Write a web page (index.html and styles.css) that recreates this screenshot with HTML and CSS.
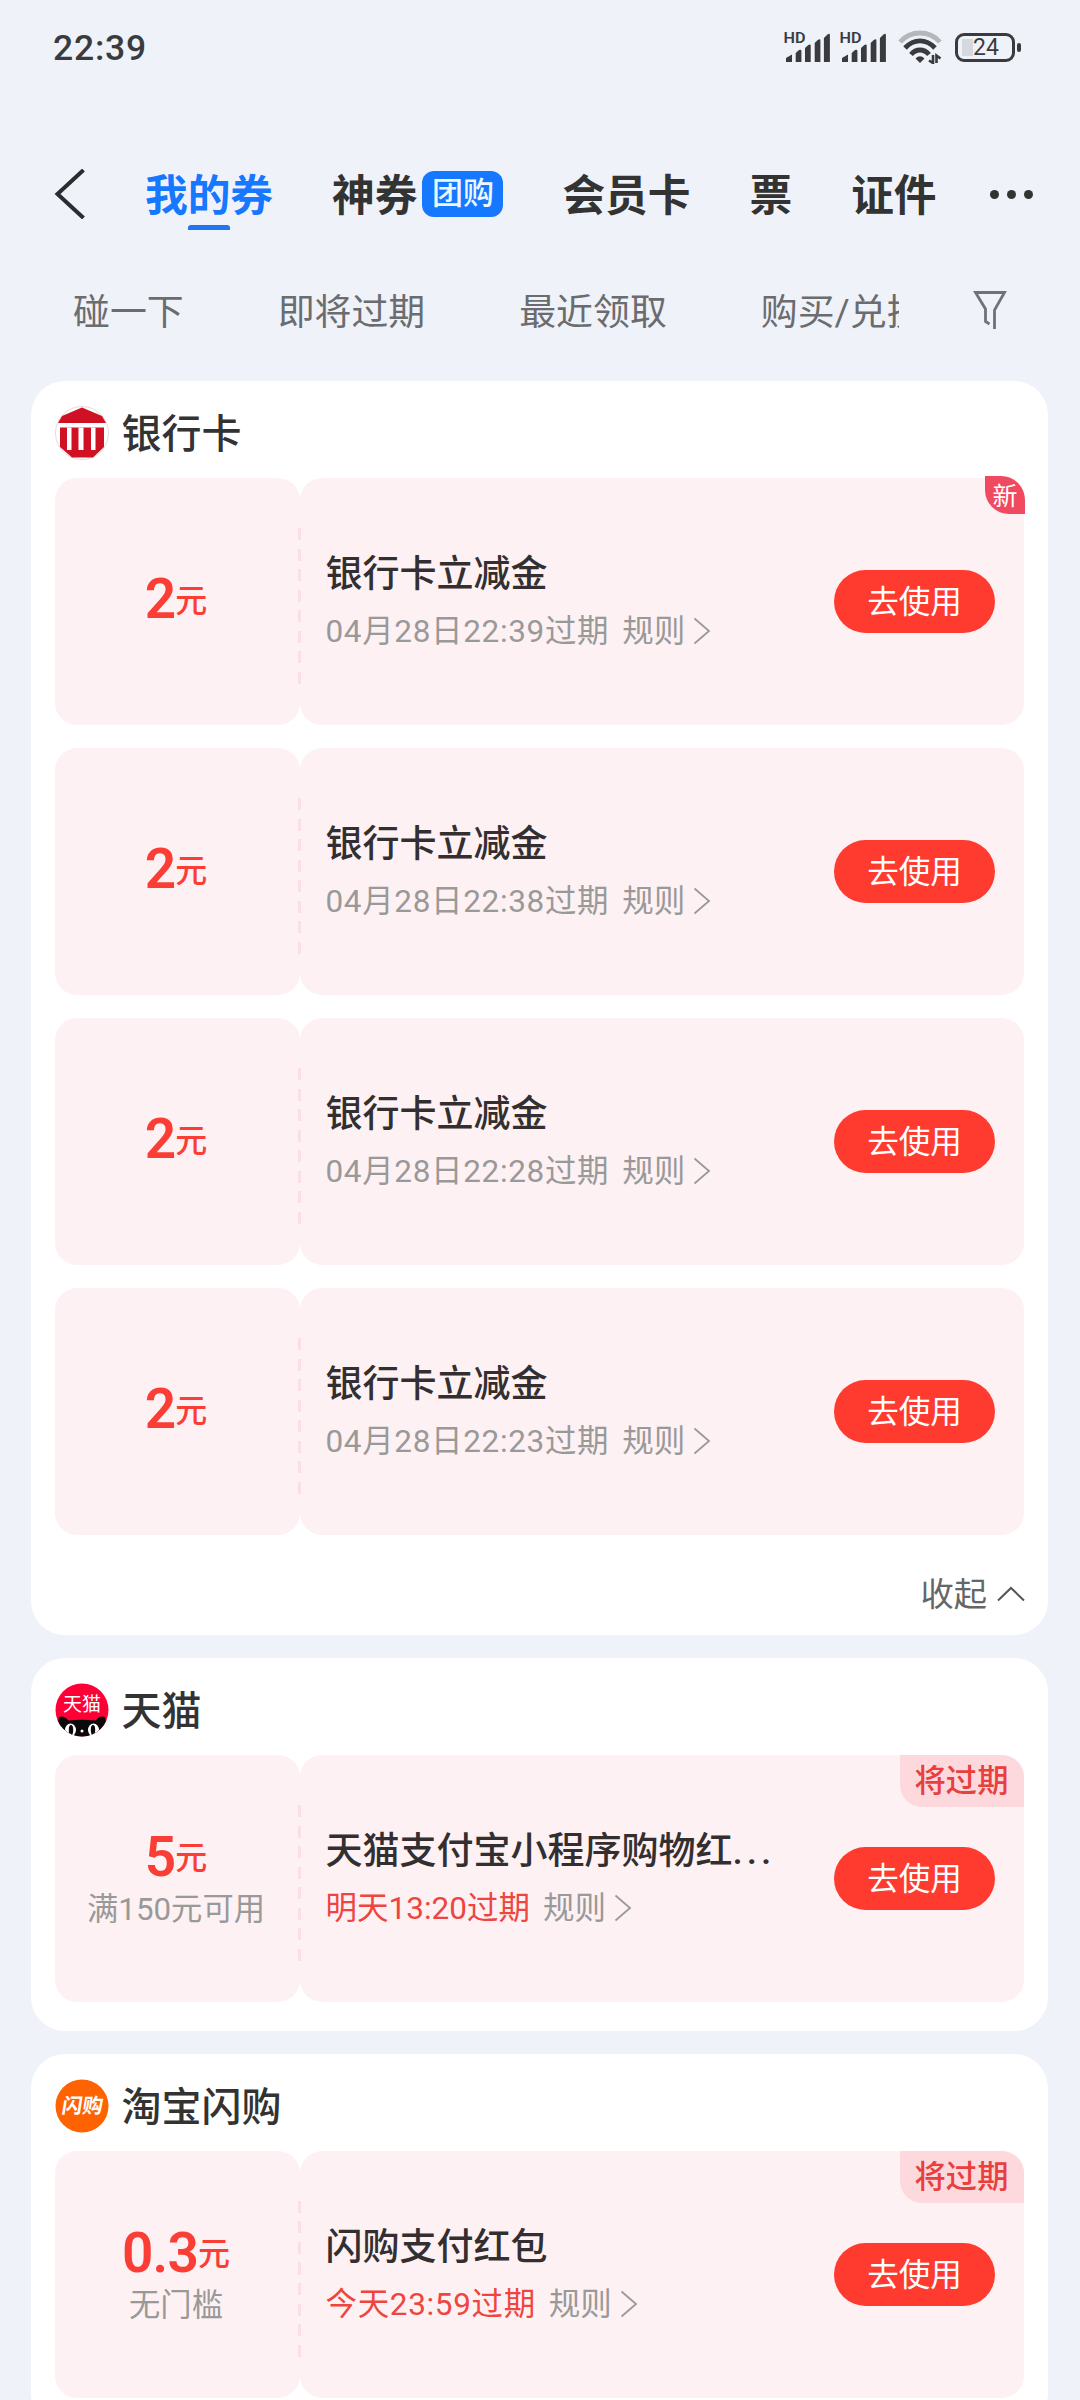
FILE: index.html
```html
<!DOCTYPE html>
<html lang="zh-CN">
<head>
  <meta charset="UTF-8">
  <meta name="viewport" content="width=device-width, initial-scale=1.0">
  <title>我的券</title>
  <link rel="stylesheet" href="styles.css">
</head>
<body>
  <svg class="sprite" aria-hidden="true">
    <symbol id="arrow" viewBox="0 0 18 28">
      <path d="M1.5 1.5L16 14L1.5 26.5" fill="none" stroke="currentColor" stroke-width="1.8"/>
    </symbol>
    <symbol id="signal" viewBox="0 0 48 32">
      <text x="-0.5" y="12" font-size="15" font-weight="600" fill="currentColor" textLength="22" lengthAdjust="spacingAndGlyphs">HD</text>
      <path d="M2 31V27L8 23.500V31Z" fill="currentColor"/>
      <path d="M11.700 31V22L15 19Q17.400 18 17.400 20V31Z" fill="currentColor"/>
      <path d="M21 31V17L24.300 14Q26.700 13 26.700 14.500V31Z" fill="currentColor"/>
      <path d="M30.700 31V12L34 8.800Q36.400 7.500 36.400 9V31Z" fill="currentColor"/>
      <path d="M39.900 31V7L43.500 3.500Q45.900 2 45.900 4V31Z" fill="currentColor"/>
    </symbol>
  </svg>

  <div class="statusbar">
    <span class="clock">22:39</span>
    <div class="status-icons">
      <svg class="signal"><use href="#signal"/></svg>
      <svg class="signal"><use href="#signal"/></svg>
      <svg class="wifi" viewBox="0 0 44 34">
        <g fill="none" stroke="#3a3b3f" stroke-width="4.800">
          <path d="M2 12C13 0 31 0 42 12" stroke="#b4b7bb"/>
          <path d="M7 18C16 8.500 28 8.500 37 18"/>
          <path d="M13 24.500C18 18.500 26 18.500 31 24.500"/>
        </g>
        <path d="M17.500 28.500Q22 24 26.500 28.500L22 33Z" fill="#3a3b3f"/>
        <path d="M35 25V33L31 30.500M38.500 33V25.500L42.500 28.500" fill="none" stroke="#3a3b3f" stroke-width="2.600"/>
      </svg>
      <div class="battery"><span>24</span></div>
    </div>
  </div>

  <div class="navbar">
    <svg class="back" viewBox="0 0 32 50">
      <path d="M29.500 1L3.500 25L29.500 49" fill="none" stroke="#2b2c30" stroke-width="4"/>
    </svg>
    <div class="tab active">我的券</div>
    <div class="tab">神券<span class="tab-badge">团购</span></div>
    <div class="tab">会员卡</div>
    <div class="tab">票</div>
    <div class="tab">证件</div>
    <div class="more"><i></i><i></i><i></i></div>
  </div>

  <div class="filters">
    <div class="filter-list">
      <span>碰一下</span>
      <span>即将过期</span>
      <span>最近领取</span>
      <span>购买/兑换</span>
    </div>
    <svg class="funnel" viewBox="0 0 34 40">
      <path d="M21.500 39V20L31.500 2.500H2.500L12.500 19V31.500L16.500 34" fill="none" stroke="#707277" stroke-width="2.800"/>
    </svg>
  </div>

  <div class="card">
    <div class="card-head">
      <svg class="logo" viewBox="0 0 54 54">
        <circle cx="27" cy="27" r="26.500" fill="#fff" stroke="#e3dcdd"/>
        <path d="M27 1.500L47 10L51 17H3L7 10Z" fill="#d01124"/>
        <path d="M5 21.500H49V41L38 51.500H17L5 41Z" fill="#d01124"/>
        <path d="M12 21.500H16.500V44H12ZM23.500 21.500H28.500V44H23.500ZM36 21.500H40.500V44H36Z" fill="#fff"/>
      </svg>
      <span class="card-title">银行卡</span>
    </div>

    <div class="coupon">
      <div class="coupon-left">
        <div class="amount only"><b>2</b><span>元</span></div>
      </div>
      <div class="coupon-right">
        <div class="info">
          <div class="name">银行卡立减金</div>
          <div class="meta"><span class="expire">04月28日22:39过期</span><span class="rule">规则</span><svg class="arrow"><use href="#arrow"/></svg></div>
        </div>
        <div class="btn">去使用</div>
      </div>
      <span class="tag-new">新</span>
    </div>

    <div class="coupon">
      <div class="coupon-left">
        <div class="amount only"><b>2</b><span>元</span></div>
      </div>
      <div class="coupon-right">
        <div class="info">
          <div class="name">银行卡立减金</div>
          <div class="meta"><span class="expire">04月28日22:38过期</span><span class="rule">规则</span><svg class="arrow"><use href="#arrow"/></svg></div>
        </div>
        <div class="btn">去使用</div>
      </div>
    </div>

    <div class="coupon">
      <div class="coupon-left">
        <div class="amount only"><b>2</b><span>元</span></div>
      </div>
      <div class="coupon-right">
        <div class="info">
          <div class="name">银行卡立减金</div>
          <div class="meta"><span class="expire">04月28日22:28过期</span><span class="rule">规则</span><svg class="arrow"><use href="#arrow"/></svg></div>
        </div>
        <div class="btn">去使用</div>
      </div>
    </div>

    <div class="coupon">
      <div class="coupon-left">
        <div class="amount only"><b>2</b><span>元</span></div>
      </div>
      <div class="coupon-right">
        <div class="info">
          <div class="name">银行卡立减金</div>
          <div class="meta"><span class="expire">04月28日22:23过期</span><span class="rule">规则</span><svg class="arrow"><use href="#arrow"/></svg></div>
        </div>
        <div class="btn">去使用</div>
      </div>
    </div>

    <div class="collapse">
      <span>收起</span>
      <svg viewBox="0 0 28 16"><path d="M1 14.500L14 2L27 14.500" fill="none" stroke="#555" stroke-width="2"/></svg>
    </div>
  </div>

  <div class="card">
    <div class="card-head">
      <svg class="logo" viewBox="0 0 54 54">
        <defs><clipPath id="round"><circle cx="27" cy="27" r="26.500"/></clipPath></defs>
        <g clip-path="url(#round)">
          <rect width="54" height="54" fill="#ff0036"/>
          <path d="M4 34Q9 32 13.500 37.500Q27 36 40.500 37.500Q45 32 50 34L54 54H0Z" fill="#0a0a0a"/>
          <ellipse cx="15.500" cy="47" rx="5.500" ry="6.500" fill="#fff"/>
          <ellipse cx="38.500" cy="47" rx="5.500" ry="6.500" fill="#fff"/>
          <ellipse cx="16" cy="47" rx="2.200" ry="5" fill="#0a0a0a"/>
          <ellipse cx="38" cy="47" rx="2.200" ry="5" fill="#0a0a0a"/>
          <circle cx="27" cy="48" r="1.500" fill="#fff"/>
        </g>
        <text class="logo-text" x="27" y="28" font-size="19" text-anchor="middle">天猫</text>
      </svg>
      <span class="card-title">天猫</span>
    </div>

    <div class="coupon">
      <div class="coupon-left">
        <div class="amount"><b>5</b><span>元</span></div>
        <div class="limit">满150元可用</div>
      </div>
      <div class="coupon-right">
        <div class="info">
          <div class="name">天猫支付宝小程序购物红<span class="dots">...</span></div>
          <div class="meta"><span class="expire soon tight">明天13:20过期</span><span class="rule">规则</span><svg class="arrow"><use href="#arrow"/></svg></div>
        </div>
        <div class="btn">去使用</div>
      </div>
      <span class="tag-soon">将过期</span>
    </div>
  </div>

  <div class="card">
    <div class="card-head">
      <svg class="logo" viewBox="0 0 54 54">
        <circle cx="27" cy="27" r="26.500" fill="#ff6200"/>
        <text class="logo-text bold" x="27" y="34" font-size="20.500" text-anchor="middle" transform="translate(5 0) skewX(-9)">闪购</text>
      </svg>
      <span class="card-title">淘宝闪购</span>
    </div>

    <div class="coupon">
      <div class="coupon-left">
        <div class="amount"><b>0.3</b><span>元</span></div>
        <div class="limit">无门槛</div>
      </div>
      <div class="coupon-right">
        <div class="info">
          <div class="name">闪购支付红包</div>
          <div class="meta"><span class="expire soon">今天23:59过期</span><span class="rule">规则</span><svg class="arrow"><use href="#arrow"/></svg></div>
        </div>
        <div class="btn">去使用</div>
      </div>
      <span class="tag-soon">将过期</span>
    </div>
  </div>
</body>
</html>
```
FILE: styles.css
```css
* {
  box-sizing: border-box;
}

body {
  margin: 0;
  height: 2400px;
  overflow: hidden;
  background-color: #eff2f8;
  color: #333;
  font-family: Roboto, "Noto Sans CJK SC", sans-serif;
}

.sprite {
  display: none;
}

.statusbar {
  display: flex;
  justify-content: space-between;
  align-items: center;
  height: 94px;
  padding: 0 59px 0 53px;
  color: #3a3b3f;
}

.clock {
  padding-top: 1px;
  font-size: 35.5px;
  font-weight: 500;
  letter-spacing: 0.8px;
  line-height: 40px;
}

.status-icons {
  display: flex;
  align-items: center;
}

.signal {
  width: 48px;
  height: 32px;
  margin-right: 8px;
}

.wifi {
  width: 44px;
  height: 34px;
  margin: 0 13px 0 2px;
}

.battery {
  position: relative;
  width: 60px;
  height: 29px;
  margin-right: 6px;
  padding-left: 2px;
  border: 3px solid #3a3b3f;
  border-radius: 9px;
  background: linear-gradient(#d5d8dc, #d5d8dc) 4px 3px / 11px 17px no-repeat;
  font-size: 23px;
  line-height: 24px;
  text-align: center;
}

.battery::after {
  content: "";
  position: absolute;
  right: -9px;
  top: 7px;
  width: 4px;
  height: 9px;
  border-radius: 2px;
  background-color: #3a3b3f;
}

.navbar {
  display: flex;
  align-items: center;
  height: 142px;
  padding: 60px 0 0 54px;
}

.back {
  width: 32px;
  height: 50px;
  margin: 0 59px 2px 0;
}

.tab {
  position: relative;
  display: flex;
  align-items: center;
  margin-right: 59px;
  padding-top: 2px;
  font-size: 42.7px;
  font-weight: 700;
  line-height: 60px;
  white-space: nowrap;
}

.tab.active {
  color: #1677ff;
}

.tab.active::after {
  content: "";
  position: absolute;
  left: 50%;
  bottom: -4px;
  width: 42px;
  height: 5px;
  margin-left: -21px;
  border-radius: 3px 3px 0 0;
  background-color: #1f76f0;
}

.tab-badge {
  width: 81px;
  height: 46px;
  margin: 0 0 4px 5px;
  border-radius: 12px;
  background-color: #1677ff;
  color: #eaf8ff;
  font-size: 31px;
  font-weight: 500;
  line-height: 45px;
  text-align: center;
}

.more {
  display: flex;
  gap: 8px;
  margin: 0 0 2px -6px;
}

.more i {
  width: 9px;
  height: 9px;
  border-radius: 50%;
  background-color: #333;
}

.filters {
  display: flex;
  align-items: center;
  height: 145px;
  padding: 9px 73px 0 73px;
}

.filter-list {
  display: flex;
  gap: 94px;
  width: 826px;
  overflow: hidden;
  color: #6a6c70;
  font-size: 36.9px;
  line-height: 54px;
  white-space: nowrap;
}

.funnel {
  width: 34px;
  height: 40px;
  margin: 0 0 6px 74px;
}

.card {
  width: 1017px;
  margin: 0 0 23px 31px;
  padding: 0 24px 29px 23.5px;
  border-radius: 34px;
  background-color: #fff;
}

.card-head {
  display: flex;
  align-items: center;
  height: 97px;
  padding-top: 7px;
}

.logo {
  width: 54px;
  height: 54px;
  margin-right: 13px;
}

.logo-text {
  fill: #fff;
}

.logo-text.bold {
  font-weight: 700;
}

.card-title {
  padding-top: 4px;
  font-size: 40px;
  font-weight: 500;
  line-height: 56px;
}

.coupon {
  position: relative;
  display: flex;
  height: 247px;
  margin-bottom: 23px;
}

.coupon:last-child {
  margin-bottom: 0;
}

.coupon-left,
.coupon-right {
  display: flex;
  border-radius: 22px;
  background-color: #fef1f3;
}

.coupon-left {
  flex-direction: column;
  justify-content: center;
  align-items: center;
  width: 245px;
  padding-right: 2px;
}

.coupon-right {
  flex: 1;
  justify-content: space-between;
  align-items: center;
  padding: 0 29px 0 26px;
}

/* perforation between the two halves */
.coupon::before {
  content: "";
  position: absolute;
  left: 243px;
  top: 50px;
  width: 3px;
  height: 156px;
  background: repeating-linear-gradient(#fbdfe3 0 12px, transparent 12px 20.5px);
}

.amount {
  display: flex;
  align-items: center;
  color: #fa3e35;
  font-size: 32px;
  font-weight: 500;
  line-height: 60px;
  white-space: nowrap;
}

.amount.only {
  padding-bottom: 5px;
}

.amount b {
  font-size: 55px;
  font-weight: 600;
  letter-spacing: -0.8px;
}

.amount span {
  padding-top: 3px;
}

.limit {
  color: #999;
  font-size: 31.3px;
  line-height: 44px;
}

.info {
  padding-top: 3px;
  white-space: nowrap;
}

.name {
  color: #332f30;
  font-size: 37px;
  font-weight: 500;
  line-height: 58px;
}

.dots {
  letter-spacing: 4px;
}

.meta {
  display: flex;
  align-items: center;
  color: #999;
  font-size: 31.5px;
  line-height: 56px;
}

.expire {
  letter-spacing: 0.65px;
}

.soon {
  color: #ee4540;
}

.tight {
  letter-spacing: 0;
}

.rule {
  margin-left: 13px;
}

.arrow {
  width: 18px;
  height: 28px;
  margin: 0 0 2px 8px;
}

.btn {
  width: 161px;
  height: 63px;
  border-radius: 32px;
  background-color: #ff3b30;
  color: #fff;
  font-size: 31.5px;
  line-height: 66px;
  text-align: center;
}

.tag-new {
  position: absolute;
  right: -1px;
  top: -2px;
  width: 40px;
  height: 38px;
  border-radius: 0 24px 0 24px;
  background-color: #ef4a60;
  color: #fff;
  font-size: 25px;
  line-height: 41px;
  text-align: center;
}

.tag-soon {
  position: absolute;
  right: 0;
  top: 0;
  width: 124px;
  height: 52px;
  padding-right: 1px;
  border-radius: 0 22px 0 22px;
  background-color: #fdd9dd;
  color: #e8403c;
  font-size: 31.3px;
  font-weight: 500;
  line-height: 54px;
  text-align: center;
}

.collapse {
  display: flex;
  justify-content: flex-end;
  align-items: center;
  height: 71px;
  margin: 0 -1px -23px 0;
  color: #666;
  font-size: 33.3px;
  line-height: 46px;
}

.collapse span {
  padding-top: 2px;
}

.collapse svg {
  width: 28px;
  height: 16px;
  margin-left: 10px;
}
```
